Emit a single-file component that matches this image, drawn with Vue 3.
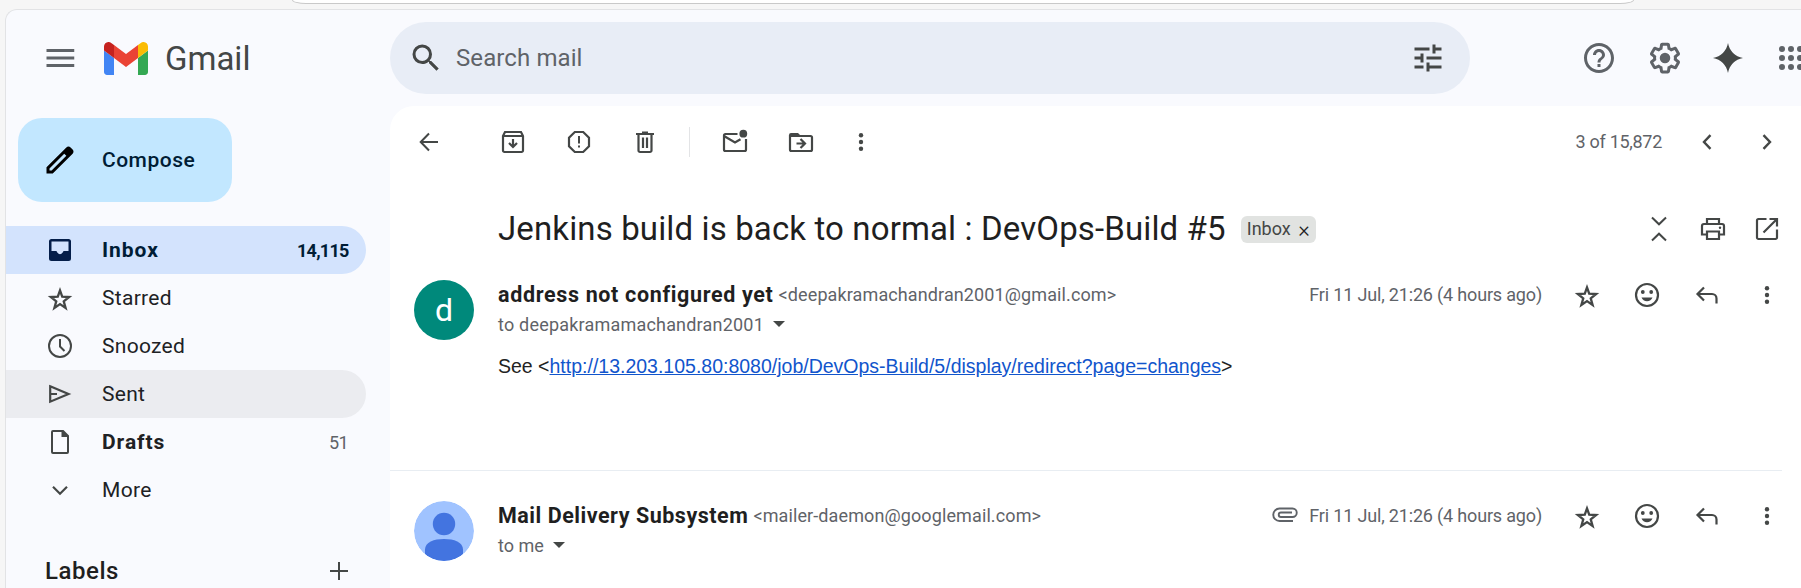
<script setup>
import { h } from 'vue'

const icons = {
  menu: [24, '<path d="M3 18h18.500v-2H3zm0-5h18.500v-2H3zm0-7v2h18.500V6z"/>'],
  search: [24, '<path d="M15.500 14h-.79l-.28-.27A6.470 6.470 0 0 0 16 9.500 6.500 6.500 0 1 0 9.500 16c1.610 0 3.090-.590 4.230-1.570l.27.28v.79l5 4.990L20.490 19zm-6 0a4.500 4.500 0 1 1 0-9 4.500 4.500 0 0 1 0 9z"/>'],
  tune: [24, '<path d="M3 17v2h6v-2H3zM3 5v2h10V5H3zm10 16v-2h8v-2h-8v-2h-2v6h2zM7 9v2H3v2h4v2h2V9H7zm14 4v-2H11v2h10zm-6-4h2V7h4V5h-4V3h-2v6z"/>'],
  help: [24, '<path d="M11 18h2v-2h-2v2zm1-16C6.480 2 2 6.480 2 12s4.480 10 10 10 10-4.480 10-10S17.520 2 12 2zm0 18c-4.410 0-8-3.590-8-8s3.590-8 8-8 8 3.590 8 8-3.590 8-8 8zm0-14c-2.210 0-4 1.790-4 4h2c0-1.100.9-2 2-2s2 .9 2 2c0 2-3 1.750-3 5h2c0-2.250 3-2.500 3-5 0-2.210-1.790-4-4-4z"/>'],
  gear: [24, '<path d="M13.85 22.25h-3.7c-.74 0-1.36-.54-1.45-1.27l-.27-1.89c-.27-.14-.53-.29-.79-.46l-1.8.72c-.7.26-1.47-.03-1.81-.65L2.2 15.53c-.35-.66-.2-1.44.36-1.88l1.53-1.19c-.01-.15-.02-.3-.02-.46 0-.15.01-.31.02-.46l-1.52-1.19c-.59-.45-.74-1.26-.37-1.88l1.85-3.19c.34-.62 1.11-.9 1.79-.63l1.81.73c.26-.17.52-.32.78-.46l.27-1.91c.09-.7.71-1.25 1.44-1.25h3.7c.74 0 1.36.54 1.45 1.27l.27 1.89c.27.14.53.29.79.46l1.8-.72c.71-.26 1.48.03 1.82.65l1.84 3.18c.36.66.2 1.44-.36 1.88l-1.52 1.19c.01.15.02.3.02.46s-.01.31-.02.46l1.52 1.19c.56.45.72 1.23.37 1.86l-1.86 3.22c-.34.62-1.11.9-1.8.63l-1.8-.72c-.26.17-.52.32-.78.46l-.27 1.91c-.1.68-.72 1.22-1.46 1.22zm-3.23-2h2.76l.37-2.55.53-.22c.44-.18.88-.44 1.34-.78l.45-.34 2.38.96 1.38-2.4-2.03-1.58.07-.56c.03-.26.06-.51.06-.78s-.03-.53-.06-.78l-.07-.56 2.03-1.58-1.39-2.4-2.39.96-.45-.35c-.42-.32-.87-.58-1.33-.77l-.52-.22-.37-2.55h-2.76l-.37 2.55-.53.21c-.44.19-.88.44-1.34.79l-.45.33-2.38-.95-1.39 2.39 2.03 1.58-.07.56a7 7 0 0 0-.06.79c0 .26.02.53.06.78l.07.56-2.03 1.58 1.38 2.4 2.39-.96.45.35c.43.33.86.58 1.33.77l.53.22.38 2.55z"/><circle cx="12" cy="12" r="3.500"/>'],
  spark: [24, '<path d="M12 2c.9 5.200 4.800 9.100 10 10-5.200.9-9.100 4.800-10 10-.9-5.200-4.800-9.100-10-10 5.200-.9 9.100-4.800 10-10z"/>'],
  apps: [24, '<path d="M6 8a2 2 0 1 0 0-4 2 2 0 0 0 0 4zm6 0a2 2 0 1 0 0-4 2 2 0 0 0 0 4zm6 0a2 2 0 1 0 0-4 2 2 0 0 0 0 4zM6 14a2 2 0 1 0 0-4 2 2 0 0 0 0 4zm6 0a2 2 0 1 0 0-4 2 2 0 0 0 0 4zm6 0a2 2 0 1 0 0-4 2 2 0 0 0 0 4zM6 20a2 2 0 1 0 0-4 2 2 0 0 0 0 4zm6 0a2 2 0 1 0 0-4 2 2 0 0 0 0 4zm6 0a2 2 0 1 0 0-4 2 2 0 0 0 0 4z"/>'],
  pencil: [24, '<path d="M20.410 4.940l-1.350-1.350c-.780-.780-2.050-.780-2.830 0L3 16.820V21h4.180L20.410 7.770c.790-.780.790-2.050 0-2.830zM6.410 19.060L5 19v-1.360l9.820-9.820 1.410 1.410z"/>'],
  inbox: [30, '<path fill-rule="evenodd" d="M6.500 4h17A2.500 2.500 0 0 1 26 6.500v17a2.500 2.500 0 0 1-2.500 2.500h-17A2.500 2.500 0 0 1 4 23.500v-17A2.500 2.500 0 0 1 6.500 4zM6.500 6.500V16h4.500c.8 0 1 1 1.500 1.800 1.200 1.800 3.800 1.800 5 0 .5-.8.7-1.800 1.500-1.800h4.500V6.500z"/>'],
  star: [30, '<path transform="translate(15 16) scale(1.100) translate(-15 -15)" d="M15 7.200l2 5.700 6.300.3-4.900 3.900 1.700 6.100-5.100-3.500-5.100 3.500 1.700-6.100-4.900-3.900 6.300-.3z" fill="none" stroke="currentColor" stroke-width="2.100"/>'],
  clock: [30, '<g fill="none" stroke="currentColor" stroke-width="2"><circle cx="15" cy="15" r="11"/><path d="M15 8v7.500l4.500 4.500"/></g>'],
  sent: [30, '<path d="M5.200 7.300L23.500 15 5.200 22.700zM6 15h6" fill="none" stroke="currentColor" stroke-width="2.200"/>'],
  draft: [30, '<path fill-rule="evenodd" d="M8 3h10.500L24 8.500V25a2 2 0 0 1-2 2H8a2 2 0 0 1-2-2V5a2 2 0 0 1 2-2zm0 2v20h14V10h-5.500V5z"/>'],
  more: [30, '<path d="M8 11.800l7 7 7-7" fill="none" stroke="currentColor" stroke-width="2.200"/>'],
  plus: [30, '<path d="M15 6v18M6 15h18" fill="none" stroke="currentColor" stroke-width="2"/>'],
  back: [30, '<path d="M24 15H7M15 6.500L6.700 15l8.300 8.500" fill="none" stroke="currentColor" stroke-width="2"/>'],
  archive: [30, '<g fill="none" stroke="currentColor" stroke-width="2.200"><path d="M5 9l2-4h16l2 4v14.500a1.500 1.500 0 0 1-1.500 1.500h-17A1.500 1.500 0 0 1 5 23.500zM5 9h20"/><path d="M15 12v7M11 16l4 4 4-4"/></g>'],
  spam: [30, '<path d="M10.800 5h8.400L25 10.800v8.400L19.200 25h-8.400L5 19.200v-8.400z" fill="none" stroke="currentColor" stroke-width="2.200"/><path d="M14 9h2v7.500h-2zM14 18.500h2v2h-2z"/>'],
  trash: [30, '<path d="M6 6h6V4.500h6V6h6v2H6z"/><path d="M8.500 7v16.500A1.500 1.500 0 0 0 10 25h10a1.500 1.500 0 0 0 1.500-1.500V7M13 10.500v10.500M17 10.500v10.500" fill="none" stroke="currentColor" stroke-width="2.200"/>'],
  unread: [30, '<circle cx="23.300" cy="6.700" r="3.900"/><path d="M17.500 7H5.500A1.500 1.500 0 0 0 4 8.500v14A1.500 1.500 0 0 0 5.500 24h19a1.500 1.500 0 0 0 1.500-1.500V12M4 9l11 6.500 5.500-3.300" fill="none" stroke="currentColor" stroke-width="2.200"/>'],
  move: [30, '<path d="M3 8a2 2 0 0 1 2-2h7l3 3H5z"/><path d="M4 8v14.500A1.500 1.500 0 0 0 5.500 24h19a1.500 1.500 0 0 0 1.500-1.500v-12A1.500 1.500 0 0 0 24.500 9H5M10.500 16.500h7M14.500 12l4.500 4.500-4.500 4.500" fill="none" stroke="currentColor" stroke-width="2.200"/>'],
  dots: [30, '<circle cx="15" cy="8.200" r="2.200"/><circle cx="15" cy="15" r="2.200"/><circle cx="15" cy="21.800" r="2.200"/>'],
  prev: [30, '<path d="M18.500 8.200L12 15l6.500 6.800" fill="none" stroke="currentColor" stroke-width="2.400"/>'],
  next: [30, '<path d="M11.500 8.200L18 15l-6.500 6.800" fill="none" stroke="currentColor" stroke-width="2.400"/>'],
  collapse: [30, '<path d="M8 3.500l7 6.800 7-6.800M8 26.500l7-6.800 7 6.800" fill="none" stroke="currentColor" stroke-width="2"/>'],
  print: [30, '<g fill="none" stroke="currentColor" stroke-width="2.200"><path d="M9 10V5h12v5M8.500 20.500H4V12a2 2 0 0 1 2-2h18a2 2 0 0 1 2 2v8.500h-4.500"/><path d="M9 17.500h12V25H9z"/></g><circle cx="22" cy="13.800" r="1.200"/>'],
  open: [30, '<path d="M14.500 5h-8A1.500 1.500 0 0 0 5 6.500v17A1.500 1.500 0 0 0 6.500 25h17a1.500 1.500 0 0 0 1.500-1.500v-8M17.500 5H25v7.500M25 5L11.500 18.500" fill="none" stroke="currentColor" stroke-width="2.200"/>'],
  smile: [30, '<circle cx="15" cy="15" r="11" fill="none" stroke="currentColor" stroke-width="2.200"/><circle cx="10.800" cy="12" r="1.900"/><circle cx="19.200" cy="12" r="1.900"/><path d="M9.500 17.500h11c-.9 2.400-3 3.700-5.500 3.700s-4.600-1.300-5.500-3.700z"/>'],
  reply: [30, '<path d="M24.500 23.500v-5a4.500 4.500 0 0 0-4.500-4.500H6.500M12 7.500L5.500 14l6.500 6.500" fill="none" stroke="currentColor" stroke-width="2.200"/>'],
  clip: [30, '<path d="M23 22H9.500a6 6 0 0 1 0-12.500h13a4 4 0 0 1 0 8.500H11a2.200 2.200 0 0 1 0-4.500h11" fill="none" stroke="currentColor" stroke-width="1.900"/>'],
}
const Icon = (p) => h('svg', {
  viewBox: `0 0 ${icons[p.name][0]} ${icons[p.name][0]}`,
  fill: 'currentColor',
  innerHTML: icons[p.name][1],
})
Icon.props = ['name']

const folders = [
  { icon: 'inbox', label: 'Inbox', count: '14,115', cls: 'active' },
  { icon: 'star', label: 'Starred' },
  { icon: 'clock', label: 'Snoozed' },
  { icon: 'sent', label: 'Sent', cls: 'hovered' },
  { icon: 'draft', label: 'Drafts', count: '51', cls: 'drafts' },
  { icon: 'more', label: 'More' },
]
const messageActions = ['star', 'smile', 'reply', 'dots']
</script>

<template>
  <div class="browser">
    <div class="omnibox"></div>
    <div class="app">
      <header class="topbar">
        <div class="brand">
          <Icon name="menu" class="i36" />
          <svg class="logo" viewBox="52 42 88 66">
            <path fill="#4285f4" d="M58 108h14V74L52 59v43c0 3.320 2.690 6 6 6" />
            <path fill="#34a853" d="M120 108h14c3.320 0 6-2.690 6-6V59l-20 15" />
            <path fill="#fbbc04" d="M120 48v26l20-15v-8c0-7.420-8.470-11.650-14.400-7.200" />
            <path fill="#ea4335" d="M72 74V48l24 18 24-18v26L96 92" />
            <path fill="#c5221f" d="M52 51v8l20 15V48l-5.600-4.200c-5.940-4.450-14.400-.220-14.400 7.200" />
          </svg>
          <span class="brand-name">Gmail</span>
        </div>
        <div class="search">
          <Icon name="search" class="i36" />
          <span class="placeholder">Search mail</span>
          <Icon name="tune" class="i36" />
        </div>
        <div class="tools">
          <Icon name="help" class="i36" />
          <Icon name="gear" class="i36" />
          <Icon name="spark" class="i36 spark" />
          <Icon name="apps" class="i36 apps" />
        </div>
      </header>

      <div class="body">
        <aside class="sidebar">
          <button class="compose">
            <Icon name="pencil" class="i36" />
            <span class="compose-label">Compose</span>
          </button>
          <nav>
            <div v-for="f in folders" :key="f.label" class="folder" :class="f.cls">
              <Icon :name="f.icon" class="i30" />
              <span class="label">{{ f.label }}</span>
              <span v-if="f.count" class="count">{{ f.count }}</span>
            </div>
          </nav>
          <div class="labels">
            <span class="labels-title">Labels</span>
            <Icon name="plus" class="i30" />
          </div>
        </aside>

        <main class="panel">
          <div class="toolbar">
            <span class="btn b60"><Icon name="back" class="i30" /></span>
            <span class="group">
              <span v-for="n in ['archive', 'spam', 'trash']" :key="n" class="btn b66"><Icon :name="n" class="i30" /></span>
            </span>
            <span class="sep"></span>
            <span v-for="n in ['unread', 'move']" :key="n" class="btn b66"><Icon :name="n" class="i30" /></span>
            <span class="btn b54"><Icon name="dots" class="i30" /></span>
            <span class="range">3 of 15,872</span>
            <span class="btn b60"><Icon name="prev" class="i30" /></span>
            <span class="btn b60"><Icon name="next" class="i30" /></span>
          </div>

          <div class="subject-row">
            <h1 class="subject">Jenkins build is back to normal : DevOps-Build #5</h1>
            <span class="chip"><span>Inbox</span><span class="chip-x">×</span></span>
            <span class="subject-tools">
              <Icon name="collapse" class="i30" />
              <Icon name="print" class="i30" />
              <Icon name="open" class="i30" />
            </span>
          </div>

          <section class="message m1">
            <div class="avatar letter">d</div>
            <div class="content">
              <div class="line">
                <span class="name">address not configured yet</span>
                <span class="email">&lt;deepakramachandran2001@gmail.com&gt;</span>
                <span class="meta"><span class="date">Fri 11 Jul, 21:26 (4 hours ago)</span></span>
                <span class="actions"><Icon v-for="n in messageActions" :key="n" :name="n" class="i30" /></span>
              </div>
              <div class="line2"><span class="to">to deepakramamachandran2001</span><i class="caret"></i></div>
              <p class="text"><span>See &lt;</span><a class="link">http://13.203.105.80:8080/job/DevOps-Build/5/display/redirect?page=changes</a><span>&gt;</span></p>
            </div>
          </section>

          <section class="message m2">
            <svg class="avatar" viewBox="0 0 60 60">
              <clipPath id="disc"><circle cx="30" cy="30" r="30" /></clipPath>
              <circle cx="30" cy="30" r="30" fill="#a0c3ff" />
              <g clip-path="url(#disc)" fill="#4374e0">
                <circle cx="30" cy="23" r="11.200" />
                <path d="M11 48.500C11 41 20 38 30 38s19 3 19 10.500V60H11z" />
              </g>
            </svg>
            <div class="content">
              <div class="line">
                <span class="name">Mail Delivery Subsystem</span>
                <span class="email">&lt;mailer-daemon@googlemail.com&gt;</span>
                <span class="meta"><Icon name="clip" class="i30 clip" /><span class="date">Fri 11 Jul, 21:26 (4 hours ago)</span></span>
                <span class="actions"><Icon v-for="n in messageActions" :key="n" :name="n" class="i30" /></span>
              </div>
              <div class="line2"><span class="to">to me</span><i class="caret"></i></div>
            </div>
          </section>
        </main>
      </div>
    </div>
  </div>
</template>

<style>
body { margin: 0; background: #f6f6f6; }
</style>

<style scoped>
.browser { width: 100vw; height: 588px; overflow: hidden; background: #f6f6f6; font-family: Roboto, "Open Sans", sans-serif; color: #444746; white-space: nowrap; }
.browser * { box-sizing: border-box; }
.browser svg { flex: none; display: block; }
.i36 { width: 36px; height: 36px; }
.i30 { width: 30px; height: 30px; }
.omnibox { height: 4px; margin: 0 167px 0 292px; background: #fff; border: 1px solid #c9c9c9; border-top: 0; border-radius: 0 0 14px 14px / 0 0 4px 4px; }
.app { margin: 5px 0 0 5px; height: 579px; border: 1px solid #e2e3e5; border-right: 0; border-bottom: 0; border-radius: 12px 0 0 0; background: #f9fafe; overflow: hidden; }

.topbar { height: 96px; display: flex; align-items: flex-start; padding-top: 12px; color: #5f6368; }
.brand { width: 384px; flex: none; height: 72px; display: flex; align-items: center; padding-left: 36px; }
.logo { width: 44px; height: 33px; margin-left: 26px; }
.brand-name { font-size: 33px; margin-left: 17px; color: #444746; }
.search { width: 1080px; flex: none; height: 72px; border-radius: 36px; background: #e8edf6; display: flex; align-items: center; padding: 0 24px 0 18px; color: #444746; }
.search svg:last-child { margin-left: auto; }
.placeholder { font-size: 24px; color: #5f6368; margin-left: 12px; letter-spacing: 0.1px; }
.tools { height: 72px; display: flex; align-items: center; padding-left: 111px; min-width: 0; overflow: hidden; }
.tools svg + svg { margin-left: 30px; }
.tools svg.spark, .tools svg.apps { margin-left: 27px; }
.spark { color: #444746; }

.body { display: flex; height: 482px; }
.sidebar { width: 384px; flex: none; padding-top: 12px; }
.compose { width: 214px; height: 84px; margin: 0 0 24px 12px; padding: 0 0 0 24px; border: 0; border-radius: 24px; background: #c2e7ff; display: flex; align-items: center; font: 500 21px Roboto, sans-serif; color: #001d35; }
.compose svg { color: #000; }
.compose-label { margin-left: 24px; letter-spacing: 0.5px; }
.folder { width: 360px; height: 48px; border-radius: 0 24px 24px 0; display: flex; align-items: center; padding: 0 18px 0 39px; font-size: 21px; color: #202124; }
.folder svg { color: #444746; }
.folder .label { margin-left: 27px; letter-spacing: 0.3px; }
.count { margin-left: auto; font-size: 18px; color: #5f6368; letter-spacing: -0.6px; }
.active { background: #d3e3fd; color: #001d35; font-weight: 700; }
.folder.active svg { color: #041e49; }
.active .count { color: #001d35; letter-spacing: -0.75px; margin-right: -0.6px; }
.hovered { background: #ebecf0; }
.folder.active .label, .folder.drafts .label { font-weight: 700; letter-spacing: 0.95px; }
.labels { width: 360px; height: 36px; margin-top: 39px; display: flex; align-items: center; justify-content: space-between; padding: 0 12px 0 39px; }
.labels-title { font-size: 24px; font-weight: 500; color: #1f1f1f; letter-spacing: 0.55px; }

.panel { flex: 1; background: #fff; border-top-left-radius: 24px; overflow: hidden; }
.toolbar { height: 72px; display: flex; align-items: center; padding: 0 4px 0 9px; }
.btn { display: flex; justify-content: center; flex: none; }
.b60 { width: 60px; }
.b66 { width: 66px; }
.b54 { width: 54px; }
.group { display: flex; margin-left: 21px; }
.sep { width: 1px; height: 30px; background: #e3e4e6; margin: 0 12px 0 11px; }
.range { margin-left: auto; margin-right: 15px; padding-bottom: 1px; font-size: 18px; color: #5f6368; letter-spacing: -0.3px; }

.subject-row { height: 60px; margin-top: 21px; padding: 0 19px 0 108px; display: flex; align-items: center; }
.subject { margin: 0; font-size: 33px; line-height: 40px; font-weight: 400; color: #1f1f1f; letter-spacing: 0.13px; }
.chip { width: 75px; height: 27px; margin-left: 15px; padding: 0 6px; border-radius: 6px; background: #e1e3e1; display: flex; align-items: center; justify-content: space-between; font-size: 18px; line-height: 25px; padding-bottom: 2px; }
.chip-x { font-size: 22px; font-weight: 300; color: #1f1f1f; padding-top: 2px; }
.subject-tools { margin-left: auto; display: flex; gap: 24px; }

.message { display: flex; padding-left: 24px; }
.m1 { height: 211px; padding-top: 21px; }
.m2 { width: 1392px; border-top: 1px solid #e8edf2; padding-top: 30px; }
.avatar { width: 60px; height: 60px; border-radius: 50%; flex: none; }
.letter { background: #00897b; color: #fff; font-size: 32px; line-height: 60px; text-align: center; }
.content { width: 1284px; flex: none; margin-left: 24px; }
.line { height: 30px; display: flex; align-items: center; }
.name { font-size: 21.5px; font-weight: 700; color: #1f1f1f; letter-spacing: 0.65px; padding-bottom: 2px; }
.m2 .name { letter-spacing: 0.52px; }
.email { font-size: 18px; margin-left: 5px; color: #5f6368; letter-spacing: 0.11px; padding-bottom: 1px; }
.meta { margin-left: auto; display: flex; align-items: center; font-size: 18px; color: #5f6368; }
.date { letter-spacing: -0.17px; line-height: 28px; padding-bottom: 1px; }
.clip { margin: -5px 9px 0 0; }
.actions { display: flex; gap: 30px; margin-left: 30px; }
.line2 { height: 30px; display: flex; align-items: center; padding-bottom: 2px; }
.to { font-size: 18px; color: #5f6368; letter-spacing: 0.2px; }
.m2 .to { letter-spacing: 0; }
.caret { border: 6px solid transparent; border-top-color: #444746; border-bottom: 0; margin-left: 9px; }
.text { margin: 14px 0 0; font: 19.5px/24px "Liberation Sans", Arial, sans-serif; color: #222; display: flex; }
.link { color: #1155cc; text-decoration: underline; }
</style>
